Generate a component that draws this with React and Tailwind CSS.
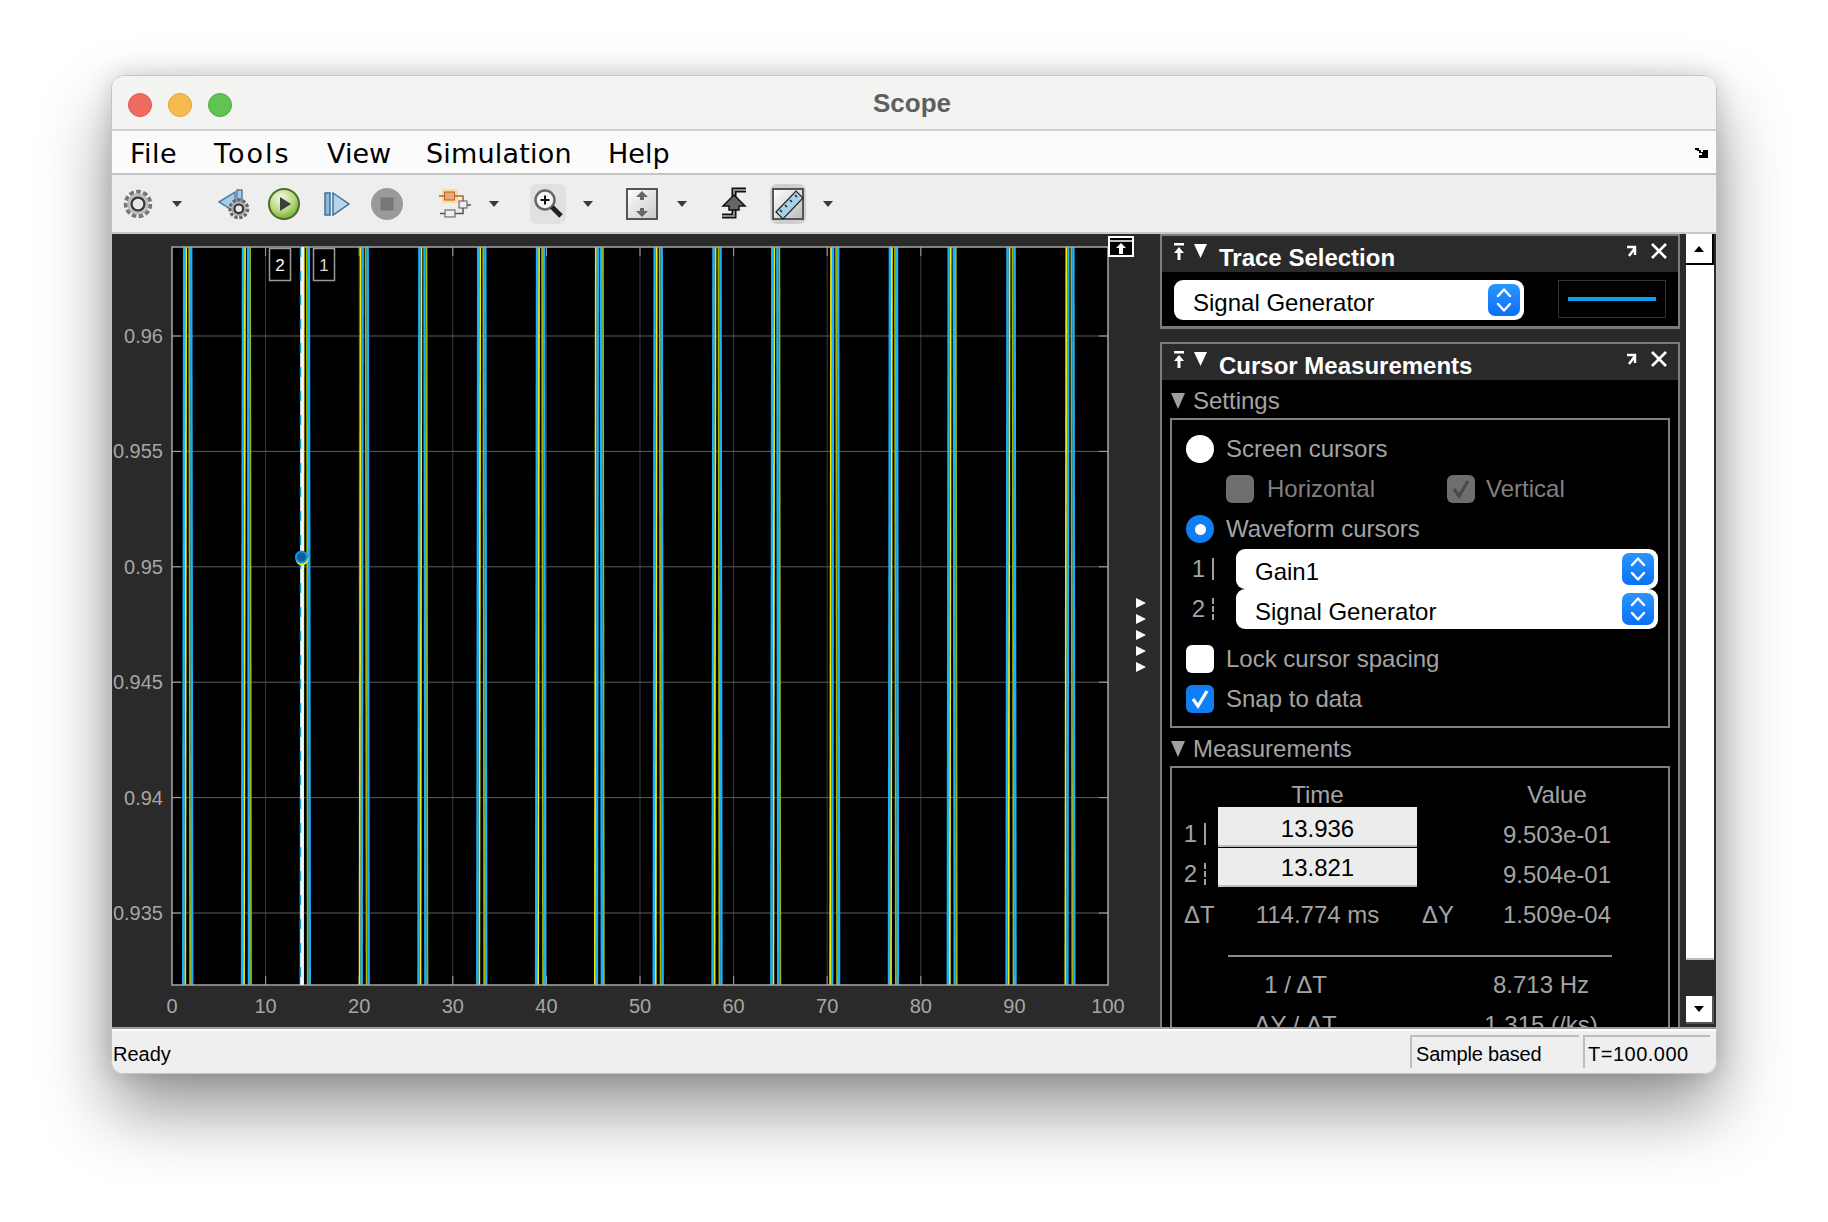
import React from 'react';

// y axis: 23080 px per unit, 0.96 sits 102 px down the chart
const yOf = (v) => 102 + (0.96 - v) * 23080;
const xOf = (t) => 59 + t * 9.36;
const TOP = 13;
const BOTTOM = 751;
const LEFT = 59;
const RIGHT = 995;
const V_TOP = 0.96386;
const V_BOTTOM = 0.9319;

const Crossing = ({ k, falling }) => {
  const a = (v) => 2 * Math.PI * k + (falling ? Math.PI - Math.asin(v) : Math.asin(v));
  const x1 = xOf(a(V_TOP));
  const x2 = xOf(a(V_BOTTOM));
  const flip = falling ? k % 3 !== 1 : k % 4 === 3;
  const blue = flip ? 2 : 0;
  const yellow = flip ? 0 : 2;
  return (
    <g>
      <line x1={x1 + yellow} y1={TOP} x2={x2 + yellow} y2={BOTTOM} strokeWidth="1.8" stroke={falling ? '#a8b400' : '#f6ea00'} />
      <line x1={x1 + blue} y1={TOP} x2={x2 + blue} y2={BOTTOM} strokeWidth="2.4" stroke="#1ab2ff" />
    </g>
  );
};

const Chart = () => {
  const yTicks = [['0.96', 0.96], ['0.955', 0.955], ['0.95', 0.95], ['0.945', 0.945], ['0.94', 0.94], ['0.935', 0.935]];
  const xTicks = [0, 10, 20, 30, 40, 50, 60, 70, 80, 90, 100];
  const periods = Array.from({ length: 16 }, (_, k) => k);
  return (
    <svg width="1048" height="794" className="block shrink-0">
      <g transform="translate(1 0)">
        <rect x={LEFT} y={TOP} width={RIGHT - LEFT} height={BOTTOM - TOP} fill="#000" />
        {xTicks.slice(1, -1).map((t) => (
          <g key={t}>
            <line x1={xOf(t)} y1={TOP} x2={xOf(t)} y2={BOTTOM} stroke="#3c3c3c" />
            <line x1={xOf(t)} y1={TOP} x2={xOf(t)} y2={TOP + 9} stroke="#a0a0a0" />
            <line x1={xOf(t)} y1={BOTTOM - 9} x2={xOf(t)} y2={BOTTOM} stroke="#a0a0a0" />
          </g>
        ))}
        {yTicks.map(([label, v]) => (
          <g key={label}>
            <line x1={LEFT} y1={yOf(v)} x2={RIGHT} y2={yOf(v)} stroke="#5c5c5c" />
            <line x1={LEFT} y1={yOf(v)} x2={LEFT + 9} y2={yOf(v)} stroke="#a8a8a8" />
            <line x1={RIGHT - 9} y1={yOf(v)} x2={RIGHT} y2={yOf(v)} stroke="#a8a8a8" />
            <text x="50" y={yOf(v) + 7} textAnchor="end" fontSize="20" fill="#a6a6a6">{label}</text>
          </g>
        ))}
        {periods.map((k) => (
          <g key={k}>
            <Crossing k={k} />
            <Crossing k={k} falling />
          </g>
        ))}
        <rect x={LEFT} y={TOP} width={RIGHT - LEFT} height={BOTTOM - TOP} fill="none" stroke="#a8a8a8" strokeWidth="1.5" />
        {xTicks.map((t) => (
          <text key={t} x={xOf(t)} y="779" textAnchor="middle" fontSize="20" fill="#a6a6a6">{t}</text>
        ))}

        {/* cursors */}
        <line x1="189" y1={TOP} x2="189" y2={BOTTOM} stroke="#f8f8f8" strokeWidth="3.5" />
        <line x1="187.5" y1={TOP} x2="187.5" y2={BOTTOM} stroke="#0a9fe8" strokeWidth="1.5" strokeDasharray="10 14" />
        <circle cx="189" cy="325" r="6.5" fill="#f6ea00" />
        <circle cx="188.5" cy="323" r="5.5" fill="#0b5d9e" stroke="#0f96e6" strokeWidth="2" />
        <rect x="156.5" y="14.5" width="21" height="32" fill="#000" stroke="#9a9a9a" strokeWidth="1.5" />
        <text x="167" y="37" textAnchor="middle" fontSize="17" fill="#fff">2</text>
        <rect x="200.5" y="14.5" width="21" height="32" fill="#000" stroke="#9a9a9a" strokeWidth="1.5" />
        <text x="211" y="37" textAnchor="middle" fontSize="17" fill="#d8d8d8">1</text>

        {/* undock + legend arrows */}
        <rect x="996" y="3" width="24" height="19" fill="#000" stroke="#fff" strokeWidth="2" />
        <line x1="996" y1="7" x2="1020" y2="7" stroke="#fff" strokeWidth="1.5" />
        <path d="M1008 9 l5 5 h-3 v6 h-4 v-6 h-3z" fill="#fff" />
        {[369, 385, 401, 417, 433].map((y) => (
          <path key={y} d={`M1023 ${y - 5} l10 5 l-10 5z`} fill="#fff" />
        ))}
      </g>
    </svg>
  );
};

const Caret = () => (
  <svg width="10" height="6" viewBox="0 0 10 6" className="shrink-0">
    <path d="M0 0 H10 L5 6z" fill="#3a3a3a" />
  </svg>
);

const GearIcon = ({ size = 30 }) => (
  <svg width={size} height={size} viewBox="0 0 30 30">
    <circle cx="15" cy="15" r="12" fill="none" stroke="#777" strokeWidth="4.5" strokeDasharray="4.5 2.3" />
    <circle cx="15" cy="15" r="9.5" fill="none" stroke="#bbb" strokeWidth="2.5" />
    <circle cx="15" cy="15" r="6.5" fill="none" stroke="#3c3c3c" strokeWidth="2.5" />
    <circle cx="15" cy="15" r="4" fill="#e6e6e6" />
  </svg>
);

const RewindGearIcon = () => (
  <svg width="32" height="32" viewBox="0 0 32 32">
    <path d="M1 14 L17 4 V24z" fill="#a9cbe6" stroke="#4f7fa8" strokeWidth="1.5" />
    <rect x="19" y="2" width="5" height="18" fill="#a9cbe6" stroke="#4f7fa8" strokeWidth="1.5" />
    <g transform="translate(10 10) scale(0.72)">
      <circle cx="15" cy="15" r="12" fill="none" stroke="#666" strokeWidth="5" strokeDasharray="4.5 2.3" />
      <circle cx="15" cy="15" r="9" fill="none" stroke="#aaa" strokeWidth="3" />
      <circle cx="15" cy="15" r="6" fill="#e8e8e8" stroke="#333" strokeWidth="3" />
    </g>
  </svg>
);

const PlayIcon = () => (
  <svg width="34" height="34" viewBox="0 0 34 34">
    <defs>
      <radialGradient id="playFill" cx="0.4" cy="0.3" r="0.8">
        <stop offset="0" stopColor="#f4f8e8" />
        <stop offset="0.55" stopColor="#b6d97a" />
        <stop offset="1" stopColor="#5fa020" />
      </radialGradient>
    </defs>
    <circle cx="17" cy="17" r="15" fill="url(#playFill)" stroke="#4a6b2a" strokeWidth="2" />
    <path d="M13 10 L24 17 L13 24z" fill="#3d3d3d" />
  </svg>
);

const StepIcon = () => (
  <svg width="28" height="28" viewBox="0 0 28 28">
    <rect x="2" y="3" width="5" height="22" fill="#8fb8d8" stroke="#3f6f98" strokeWidth="1.5" />
    <path d="M10 3 L26 14 L10 25z" fill="#b5d5ee" stroke="#3f6f98" strokeWidth="1.5" />
  </svg>
);

const StopIcon = () => (
  <svg width="34" height="34" viewBox="0 0 34 34">
    <circle cx="17" cy="17" r="16" fill="#9a9a9a" />
    <rect x="10.5" y="10.5" width="13" height="13" fill="#777" />
  </svg>
);

const BlocksIcon = () => (
  <svg width="34" height="30" viewBox="0 0 34 30">
    <rect x="3" y="0" width="16" height="14" rx="2" fill="#fbd9a0" />
    <rect x="5.5" y="3" width="10" height="8" fill="#e9a877" stroke="#b8602c" />
    <path d="M0 7 H5 M16 7 H24 V12" fill="none" stroke="#b8602c" strokeWidth="1.5" />
    <rect x="20" y="12" width="8" height="7" fill="#eee" stroke="#555" />
    <path d="M28 16 H32" stroke="#555" strokeWidth="1.5" />
    <rect x="6" y="21" width="10" height="7" fill="#eee" stroke="#555" />
    <path d="M1 24.5 H6 M16 24.5 H24 V19" fill="none" stroke="#555" strokeWidth="1.5" />
  </svg>
);

const ZoomIcon = () => (
  <svg width="32" height="32" viewBox="0 0 32 32">
    <circle cx="13" cy="12" r="9.5" fill="#f4f6f8" stroke="#666" strokeWidth="2.5" />
    <path d="M8.5 12 H17.5 M13 7.5 V16.5" stroke="#111" strokeWidth="2" />
    <path d="M20 19 L29 28" stroke="#222" strokeWidth="5" />
  </svg>
);

const ScaleIcon = () => (
  <svg width="32" height="32" viewBox="0 0 32 32">
    <defs>
      <linearGradient id="scaleFill" x1="0" y1="0" x2="1" y2="1">
        <stop offset="0" stopColor="#ffffff" />
        <stop offset="1" stopColor="#c8c8c8" />
      </linearGradient>
    </defs>
    <rect x="1" y="1" width="30" height="30" fill="url(#scaleFill)" stroke="#555" strokeWidth="2" />
    <path d="M16 3 L22 9 H18 V12 H14 V9 H10z M16 29 L22 23 H18 V20 H14 V23 H10z" fill="#666" />
  </svg>
);

const TriggerIcon = () => (
  <svg width="28" height="34" viewBox="0 0 28 34">
    <path d="M26 3 H14 V29 H2" fill="none" stroke="#111" strokeWidth="5" />
    <path d="M26 3 H14 V29 H2" fill="none" stroke="#8a8a8a" strokeWidth="2" />
    <path d="M14 8 L25 19 H19 V23 H9 V19 H3z" fill="#666" stroke="#111" strokeWidth="1.5" />
  </svg>
);

const RulerIcon = () => (
  <svg width="32" height="32" viewBox="0 0 32 32">
    <defs>
      <linearGradient id="rulerBg" x1="0" y1="0" x2="1" y2="1">
        <stop offset="0" stopColor="#ffffff" />
        <stop offset="1" stopColor="#bbbbbb" />
      </linearGradient>
    </defs>
    <rect x="1" y="1" width="30" height="30" fill="url(#rulerBg)" stroke="#555" strokeWidth="2" />
    <path d="M4 24 L24 3 L31 10 L11 31z" fill="#a8d2ea" stroke="#222" strokeWidth="1.2" />
    <path d="M10 24 L8 22 M15 19 L13 17 M20 14 L18 12 M25 9 L23 7" stroke="#222" strokeWidth="1.5" />
  </svg>
);

const Toolbar = () => (
  <div className="flex h-[59px] shrink-0 items-center border-b-2 border-[#c8c8c8] bg-[#eeeeee] pl-[11px]">
    <GearIcon />
    <div className="ml-[19px]"><Caret /></div>
    <div className="ml-[36px]"><RewindGearIcon /></div>
    <div className="ml-[17px]"><PlayIcon /></div>
    <div className="ml-[22px]"><StepIcon /></div>
    <div className="ml-[19px]"><StopIcon /></div>
    <div className="ml-[35px]"><BlocksIcon /></div>
    <div className="ml-[16px]"><Caret /></div>
    <div className="ml-[31px] flex h-[40px] w-[36px] items-center justify-center rounded-[7px] bg-[#e1e1e1]"><ZoomIcon /></div>
    <div className="ml-[17px]"><Caret /></div>
    <div className="ml-[33px]"><ScaleIcon /></div>
    <div className="ml-[19px]"><Caret /></div>
    <div className="ml-[33px]"><TriggerIcon /></div>
    <div className="ml-[22px] flex h-[40px] w-[36px] items-center justify-center rounded-[7px] bg-[#cfcfcf]"><RulerIcon /></div>
    <div className="ml-[17px]"><Caret /></div>
  </div>
);

const SpinButton = () => (
  <div className="flex h-[32px] w-[32px] items-center justify-center rounded-[7px] bg-gradient-to-b from-[#2b95ff] to-[#0a70f5]">
    <svg width="16" height="26" viewBox="0 0 16 26" fill="none" stroke="#fff" strokeWidth="2.4" strokeLinecap="round" strokeLinejoin="round">
      <path d="M2 9 L8 2.5 L14 9" />
      <path d="M2 17 L8 23.5 L14 17" />
    </svg>
  </div>
);

const Select = ({ label, className }) => (
  <div className={`flex items-center justify-between rounded-[9px] bg-white pl-[19px] pr-[4px] text-black ${className}`}>
    <span className="pt-[6px]">{label}</span>
    <SpinButton />
  </div>
);

const Radio = ({ on }) => (
  <div className={`flex h-[28px] w-[28px] shrink-0 items-center justify-center rounded-full ${on ? 'bg-[#0f7ef5]' : 'bg-white'}`}>
    {on && <div className="h-[11px] w-[11px] rounded-full bg-white" />}
  </div>
);

const Check = ({ on, disabled }) => (
  <div className={`flex h-[28px] w-[28px] shrink-0 items-center justify-center rounded-[6px] ${disabled ? 'bg-[#6e6e6e]' : on ? 'bg-[#0f7ef5]' : 'bg-white'}`}>
    {on && (
      <svg width="22" height="22" viewBox="0 0 22 22" fill="none" stroke={disabled ? '#4a4a4a' : '#fff'} strokeWidth="3.2">
        <path d="M4 11 L9 18 L18 3" />
      </svg>
    )}
  </div>
);

const PanelHeader = ({ title }) => (
  <div className="flex h-[36px] shrink-0 items-center bg-[#2a2a2a] pl-[11px] pr-[10px]">
    <svg width="34" height="20" viewBox="0 0 34 20" className="mb-[2px] shrink-0" fill="#fff">
      <rect x="1" y="0" width="10" height="2.5" />
      <path d="M6 4 L11 10 H7.5 V17 H4.5 V10 H1z" />
      <path d="M21 1 H34 L27.5 15z" />
    </svg>
    <span className="ml-[12px] pt-[7px] font-bold text-white">{title}</span>
    <svg width="44" height="20" viewBox="0 0 44 20" className="mb-[4px] ml-auto shrink-0" fill="none" stroke="#fff">
      <path d="M3 5 H11 V13 M5 14 L11 6" strokeWidth="2.4" />
      <path d="M28 2 L42 16 M42 2 L28 16" strokeWidth="2.6" />
    </svg>
  </div>
);

const SectionLabel = ({ children }) => (
  <div className="flex items-center">
    <svg width="14" height="16" viewBox="0 0 14 16" className="shrink-0"><path d="M0 0 H14 L7 16z" fill="#a0a0a0" /></svg>
    <span className="ml-[8px]">{children}</span>
  </div>
);

const CursorTag = ({ n, dashed }) => (
  <div className="flex w-[46px] shrink-0 items-center justify-center gap-[7px]">
    <span>{n}</span>
    <span className={`h-[22px] w-0 border-l-2 border-[#a0a0a0] ${dashed ? 'border-dashed' : ''}`} />
  </div>
);

const PanelColumn = () => (
  <div className="flex h-[794px] w-[520px] shrink-0 flex-col gap-[13px] overflow-hidden">
    <section className="h-[95px] shrink-0 border-2 border-b-[3px] border-[#7c7c7c] bg-black">
      <PanelHeader title="Trace Selection" />
      <div className="flex items-start pl-[12px] pt-[8px]">
        <Select label="Signal Generator" className="h-[40px] w-[350px]" />
        <div className="ml-[34px] flex h-[38px] w-[108px] items-center justify-center border border-[#333]">
          <div className="h-[4px] w-[88px] bg-[#0f9bf0]" />
        </div>
      </div>
    </section>

    <section className="flex-1 overflow-hidden border-2 border-b-0 border-[#7c7c7c] bg-black text-[#a4a4a4]">
      <PanelHeader title="Cursor Measurements" />
      <div className="pl-[9px] pt-[9px]"><SectionLabel>Settings</SectionLabel></div>
      <div className="ml-[8px] mt-[5px] h-[310px] w-[500px] border-2 border-[#808080] pt-[9px]">
        <div className="flex h-[40px] items-center pl-[14px]">
          <Radio />
          <span className="ml-[12px]">Screen cursors</span>
        </div>
        <div className="flex h-[40px] items-center pl-[54px] text-[#808080]">
          <Check disabled />
          <span className="ml-[13px]">Horizontal</span>
          <div className="ml-[72px]"><Check on disabled /></div>
          <span className="ml-[11px]">Vertical</span>
        </div>
        <div className="flex h-[40px] items-center pl-[14px]">
          <Radio on />
          <span className="ml-[12px]">Waveform cursors</span>
        </div>
        <div className="flex h-[40px] items-center pl-[8px]">
          <CursorTag n="1" />
          <Select label="Gain1" className="ml-[10px] h-[40px] w-[422px]" />
        </div>
        <div className="flex h-[40px] items-center pl-[8px]">
          <CursorTag n="2" dashed />
          <Select label="Signal Generator" className="ml-[10px] h-[40px] w-[422px]" />
        </div>
        <div className="mt-[10px] flex h-[40px] items-center pl-[14px]">
          <Check />
          <span className="ml-[12px]">Lock cursor spacing</span>
        </div>
        <div className="flex h-[40px] items-center pl-[14px]">
          <Check on />
          <span className="ml-[12px]">Snap to data</span>
        </div>
      </div>
      <div className="pl-[9px] pt-[9px]"><SectionLabel>Measurements</SectionLabel></div>
      <div className="ml-[8px] mt-[5px] h-[300px] w-[500px] border-2 border-b-0 border-[#808080]">
        <div className="grid grid-cols-[46px_199px_63px_154px] items-center">
          <div className="col-span-4 grid h-[39px] grid-cols-[46px_199px_63px_154px] items-end">
            <span />
            <span className="text-center">Time</span>
            <span />
            <span className="text-center">Value</span>
          </div>
          <div className="flex h-[40px] items-end pb-[1px]"><CursorTag n="1" /></div>
          <div className="flex h-[40px] items-center justify-center border-b-2 border-[#bdbdbd] bg-[#ececec] pt-[5px] text-black">13.936</div>
          <span />
          <div className="flex h-[40px] items-end justify-center">9.503e-01</div>
          <div className="flex h-[40px] items-end pb-[1px]"><CursorTag n="2" dashed /></div>
          <div className="flex h-[39px] items-center justify-center border-b-2 border-[#bdbdbd] bg-[#ececec] pt-[3px] text-black">13.821</div>
          <span />
          <div className="flex h-[39px] items-end justify-center">9.504e-01</div>
          <div className="flex h-[40px] items-end pl-[12px]">ΔT</div>
          <div className="flex h-[40px] items-end justify-center">114.774 ms</div>
          <div className="flex h-[40px] items-end pl-[5px]">ΔY</div>
          <div className="flex h-[40px] items-end justify-center">1.509e-04</div>
        </div>
        <div className="ml-[56px] mt-[28px] h-[2px] w-[384px] bg-[#8a8a8a]" />
        <div className="mt-[14px] grid h-[28px] grid-cols-[46px_199px_63px_154px] items-center">
          <span />
          <span className="pr-[44px] text-center">1 / ΔT</span>
          <span />
          <span className="pr-[32px] text-center">8.713 Hz</span>
        </div>
        <div className="mt-[12px] grid h-[28px] grid-cols-[46px_199px_63px_154px] items-center">
          <span />
          <span className="pr-[44px] text-center">ΔY / ΔT</span>
          <span />
          <span className="pr-[32px] text-center">1.315 (/ks)</span>
        </div>
      </div>
    </section>
  </div>
);

const Scrollbar = () => (
  <div className="ml-[6px] flex h-[790px] w-[28px] shrink-0 flex-col">
    <div className="flex h-[31px] items-center justify-center border-b-2 border-r-2 border-black bg-white">
      <svg width="10" height="6" viewBox="0 0 10 6"><path d="M0 6 H10 L5 0z" fill="#000" /></svg>
    </div>
    <div className="flex-1 border-b-2 border-[#bbbbbb] bg-white" />
    <div className="h-[36px] bg-[#2a2a2a]" />
    <div className="flex h-[28px] items-center justify-center border-b-2 border-r-2 border-[#555] bg-white">
      <svg width="10" height="6" viewBox="0 0 10 6"><path d="M0 0 H10 L5 6z" fill="#000" /></svg>
    </div>
  </div>
);

const App = () => (
  <div className="h-[1222px] overflow-hidden bg-white pl-[111px] pt-[75px] font-['Liberation_Sans',Arial,sans-serif] text-[24px] leading-none">
    <div className="flex h-[999px] w-[1606px] flex-col overflow-hidden rounded-[13px] border border-[#c4c4c4] shadow-[0_36px_70px_rgba(0,0,0,0.42),0_0_24px_rgba(0,0,0,0.16)]">
      {/* title bar */}
      <div className="relative flex h-[55px] shrink-0 items-center justify-center border-b-2 border-[#cfcfcf] bg-[#f3f3f1] pr-[4px]">
        <div className="absolute left-[16px] top-[17px] flex gap-[16px]">
          <div className="h-[24px] w-[24px] rounded-full border border-[#dc5a52] bg-[#f06a60]" />
          <div className="h-[24px] w-[24px] rounded-full border border-[#dfa43c] bg-[#f6bb4e]" />
          <div className="h-[24px] w-[24px] rounded-full border border-[#4fa942] bg-[#5fc454]" />
        </div>
        <span className="text-[26px] font-bold text-[#5f5f5f]">Scope</span>
      </div>

      {/* menu */}
      <div className="relative flex h-[44px] shrink-0 items-center border-b-2 border-[#c4c4c4] bg-[#fbfbfb] pl-[18px] pt-[2px] font-['DejaVu_Sans',sans-serif] text-[27px] text-black">
        <span className="w-[84px] tracking-[0.5px]">File</span>
        <span className="w-[113px] tracking-[2px]">Tools</span>
        <span className="w-[99px]">View</span>
        <span className="w-[182px] tracking-[0.2px]">Simulation</span>
        <span>Help</span>
        <svg width="16" height="12" viewBox="0 0 16 12" className="absolute right-[6px] top-[16px]">
          <path d="M1 1 H5 V3 H7 V5 H9 V3 H14 V11 H5 V8 H8 V6 H5 V4 H3 V3 H1z" fill="#000" />
        </svg>
      </div>

      <Toolbar />

      {/* body */}
      <div className="flex h-[793px] shrink-0 overflow-hidden bg-[#2a2a2a]">
        <Chart />
        <PanelColumn />
        <Scrollbar />
      </div>

      {/* status bar */}
      <div className="flex min-h-0 flex-1 items-center border-t-2 border-[#9c9c9c] bg-[#efefef] text-[20px] text-black shadow-[inset_0_2px_0_#ffffff]">
        <span className="ml-[1px] pt-[6px]">Ready</span>
        <div className="ml-auto flex h-[33px] w-[169px] items-center border-l-2 border-t-2 border-[#bdbdbd] pl-[4px] pt-[3px] tracking-[-0.2px]">Sample based</div>
        <div className="ml-[4px] mr-[6px] flex h-[33px] w-[127px] items-center border-l-2 border-t-2 border-[#bdbdbd] pl-[3px] pt-[3px] tracking-[0.5px]">T=100.000</div>
      </div>
    </div>
  </div>
);

export default App;
